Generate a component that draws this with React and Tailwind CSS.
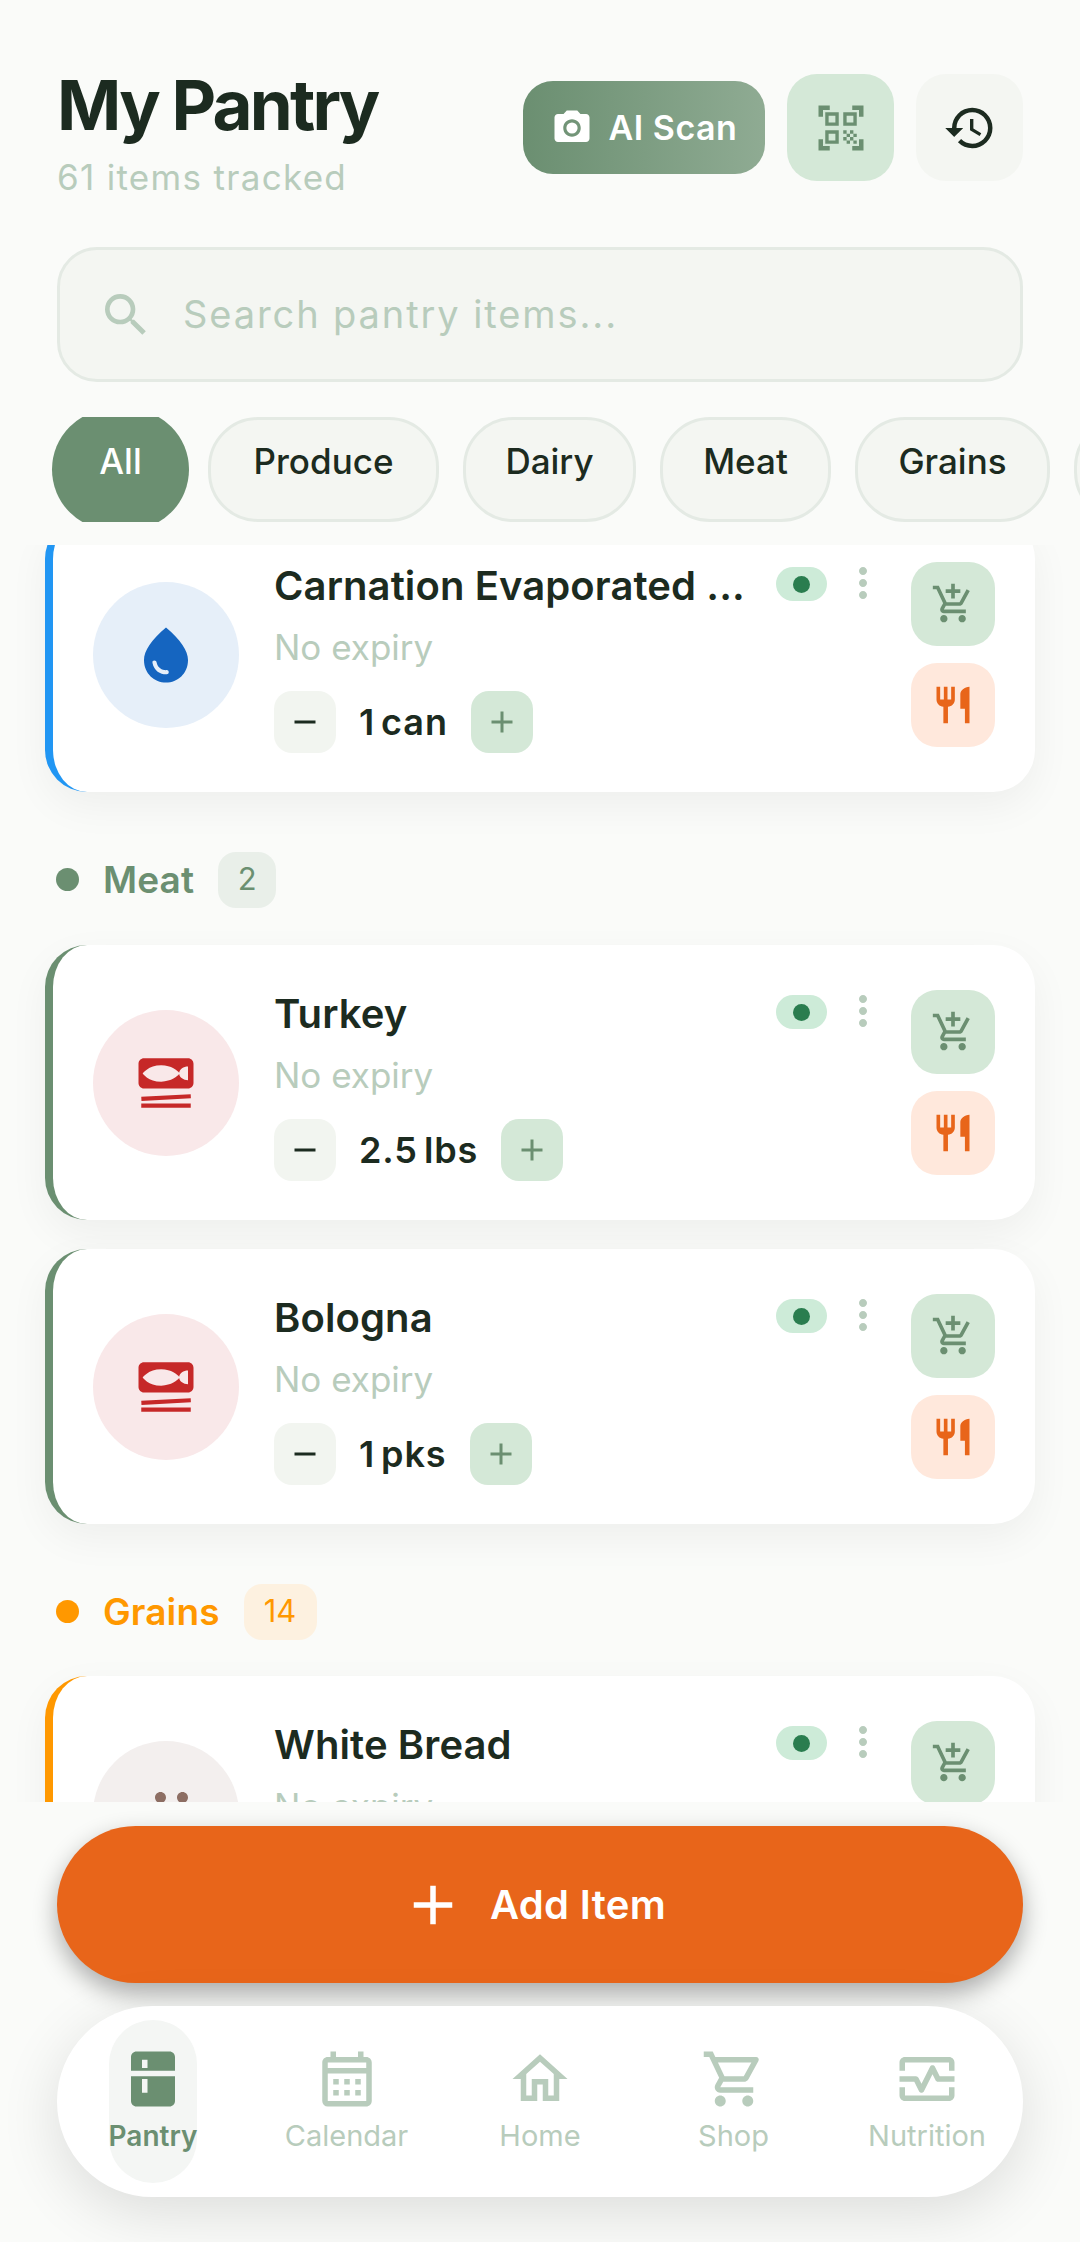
import React from "react";
import {
  MdCameraAlt,
  MdQrCodeScanner,
  MdHistory,
  MdSearch,
  MdWaterDrop,
  MdSetMeal,
  MdGrain,
  MdOutlineAddShoppingCart,
  MdRestaurant,
  MdMoreVert,
  MdAdd,
  MdRemove,
  MdKitchen,
  MdOutlineCalendarMonth,
  MdOutlineHome,
  MdOutlineShoppingCart,
  MdOutlineMonitorHeart,
} from "react-icons/md";

const chips = [
  { label: "Produce", width: "w-[231px]" },
  { label: "Dairy", width: "w-[173px]" },
  { label: "Meat", width: "w-[171px]" },
  { label: "Grains", width: "w-[195px]" },
  { label: "Frozen", width: "w-[190px]" },
];

const ItemCard = ({ name, qty, border, circle, icon: Icon, iconColor }) => (
  <div
    className={`flex h-[275px] shrink-0 items-start rounded-[42px] border-l-[8px] bg-white pl-[40px] pr-[40px] shadow-[0_14px_40px_rgba(0,0,0,0.05)] ${border}`}
  >
    <div className={`mt-[65px] flex h-[146px] w-[146px] shrink-0 items-center justify-center rounded-full ${circle}`}>
      <Icon size={66} className={iconColor} />
    </div>
    <div className="ml-[35px] flex w-[470px] shrink-0 flex-col pt-[44px]">
      <div className="text-[40px] leading-[50px] font-semibold tracking-[0.1px] whitespace-nowrap text-[#1C2B20]">{name}</div>
      <div className="mt-[11px] text-[35px] leading-[50px] text-[#B8CCBC]">No expiry</div>
      <div className="mt-[19px] flex items-center gap-[23px]">
        <div className="flex h-[62px] w-[62px] items-center justify-center rounded-[18px] bg-[#F2F5F0]">
          <MdRemove size={36} className="text-[#1C2B20]" />
        </div>
        <span className="text-[36px] leading-[62px] font-semibold tracking-[0.9px] [word-spacing:-4px] text-[#1C2B20]">{qty}</span>
        <div className="flex h-[62px] w-[62px] items-center justify-center rounded-[18px] bg-[#D4E8D7]">
          <MdAdd size={36} className="text-[#6B8F71]" />
        </div>
      </div>
    </div>
    <div className="ml-[32px] mt-[50px] flex h-[34px] w-[51px] shrink-0 items-center justify-center rounded-full bg-[#CDEBD8]">
      <div className="h-[17px] w-[17px] rounded-full bg-[#2A7D4F]" />
    </div>
    <MdMoreVert size={48} className="mt-[42px] ml-[12px] shrink-0 text-[#B8CCBC]" />
    <div className="mt-[45px] ml-[24px] flex shrink-0 flex-col gap-[17px]">
      <div className="flex h-[84px] w-[84px] items-center justify-center rounded-[26px] bg-[#D4E8D7]">
        <MdOutlineAddShoppingCart size={44} className="text-[#6B8F71]" />
      </div>
      <div className="flex h-[84px] w-[84px] items-center justify-center rounded-[26px] bg-[#FFE8DC]">
        <MdRestaurant size={44} className="text-[#E8651A]" />
      </div>
    </div>
  </div>
);

const SectionHeader = ({ label, count, dot, text, badge, badgeWidth }) => (
  <div className="flex h-[57px] items-center pl-[11px]">
    <div className={`h-[23px] w-[23px] rounded-full ${dot}`} />
    <span className={`ml-[24px] text-[37px] leading-[50px] font-semibold tracking-[0.1px] ${text}`}>{label}</span>
    <div className={`ml-[24px] flex h-[56px] items-center justify-center rounded-[18px] text-[31px] ${badge} ${text} ${badgeWidth}`}>
      {count}
    </div>
  </div>
);

const NavItem = ({ icon: Icon, label, active }) => (
  <div
    className={`flex h-[163px] w-[88px] flex-col items-center rounded-[44px] pt-[26px] ${active ? "bg-[#F4F6F4] text-[#6B8F71]" : "text-[#B8CCBC]"}`}
  >
    <Icon size={66} className="shrink-0" />
    <span className={`mt-[4px] leading-[40px] whitespace-nowrap ${active ? "text-[28px] font-semibold" : "text-[29px]"}`}>{label}</span>
  </div>
);

export default function App() {
  return (
    <div
      className="flex h-[2242px] w-[1080px] flex-col overflow-hidden bg-[#FAFBF9]"
      style={{ fontFamily: "Inter, 'Noto Sans', sans-serif" }}
    >
      {/* Header */}
      <div className="flex h-[247px] shrink-0 items-start justify-between pl-[57px] pr-[57px] pt-[70px]">
        <div>
          <h1 className="text-[69px] leading-[70px] font-bold tracking-[-2.8px] text-[#1C2B20]">My Pantry</h1>
          <p className="mt-[12px] text-[35px] leading-[50px] tracking-[1.3px] text-[#B8CCBC]">61 items tracked</p>
        </div>
        <div className="mt-[4px] flex items-start gap-[22px]">
          <div className="mt-[7px] flex h-[93px] w-[242px] items-center justify-center gap-[16px] rounded-[30px] bg-linear-to-r from-[#6B8F71] to-[#8FAB93] text-white">
            <MdCameraAlt size={42} />
            <span className="text-[34px] font-semibold tracking-[0.5px]">AI Scan</span>
          </div>
          <div className="flex h-[107px] w-[107px] items-center justify-center rounded-[30px] bg-[#D4E8D7]">
            <MdQrCodeScanner size={54} className="text-[#6B8F71]" />
          </div>
          <div className="flex h-[107px] w-[107px] items-center justify-center rounded-[30px] bg-[#F4F6F2]">
            <MdHistory size={54} className="text-[#1C2B20]" />
          </div>
        </div>
      </div>

      {/* Search */}
      <div className="mx-[57px] flex h-[135px] shrink-0 items-center rounded-[40px] border-[3px] border-[#E4EAE4] bg-[#F4F6F2] pl-[38px]">
        <MdSearch size={56} className="text-[#B8CCBC]" />
        <span className="ml-[29px] text-[38px] tracking-[1.9px] text-[#B8CCBC]">Search pantry items...</span>
      </div>

      {/* Category chips */}
      <div className="mt-[35px] flex h-[105px] shrink-0 gap-[24px] overflow-hidden pl-[52px]">
        <div className="-mt-[8px] -mr-[5px] flex h-[121px] w-[137px] shrink-0 justify-center rounded-full bg-[#6B8F71] pt-[32px] text-[35px] leading-[40px] font-medium text-white">
          All
        </div>
        {chips.map((c) => (
          <div
            key={c.label}
            className={`flex h-[105px] shrink-0 justify-center rounded-[50px] border-[3px] border-[#E4EAE4] bg-[#F4F6F2] pt-[21px] text-[35px] leading-[40px] font-medium text-[#1C2B20] ${c.width}`}
          >
            {c.label}
          </div>
        ))}
      </div>

      {/* Scrolled list */}
      <div className="mt-[23px] h-[1257px] shrink-0 overflow-hidden px-[45px]">
        <div className="-mt-[28px] flex flex-col">
          <ItemCard
            name="Carnation Evaporated ..."
            qty="1 can"
            border="border-[#2196F3]"
            circle="bg-[#E6EFF9]"
            icon={MdWaterDrop}
            iconColor="text-[#1565C0]"
          />
          <div className="mt-[59px] mb-[37px]">
            <SectionHeader label="Meat" count="2" dot="bg-[#6B8F71]" text="text-[#6B8F71]" badge="bg-[#E9EFE9]" badgeWidth="w-[58px]" />
          </div>
          <div className="flex flex-col gap-[29px]">
            <ItemCard name="Turkey" qty="2.5 lbs" border="border-[#6B8F71]" circle="bg-[#F9E8E9]" icon={MdSetMeal} iconColor="text-[#C62828]" />
            <ItemCard name="Bologna" qty="1 pks" border="border-[#6B8F71]" circle="bg-[#F9E8E9]" icon={MdSetMeal} iconColor="text-[#C62828]" />
          </div>
          <div className="mt-[59px] mb-[36px]">
            <SectionHeader label="Grains" count="14" dot="bg-[#FF9800]" text="text-[#FF9800]" badge="bg-[#FDF1E0]" badgeWidth="w-[73px]" />
          </div>
          <ItemCard name="White Bread" qty="1 loaf" border="border-[#FF9800]" circle="bg-[#F3EFEE]" icon={MdGrain} iconColor="text-[#8D6E63]" />
        </div>
      </div>

      {/* Add item */}
      <div className="mx-[57px] mt-[24px] flex h-[157px] shrink-0 items-center justify-center gap-[24px] rounded-full bg-[#E8651A] pr-[14px] text-white shadow-[0_10px_24px_rgba(0,0,0,0.32)]">
        <MdAdd size={66} />
        <span className="text-[40px] font-semibold tracking-[0.3px]">Add Item</span>
      </div>

      {/* Bottom nav */}
      <div className="mx-[57px] mt-[23px] flex h-[191px] shrink-0 items-center justify-between rounded-[96px] bg-white pl-[52px] pr-[52px] shadow-[0_16px_60px_rgba(0,0,0,0.12)]">
        <NavItem icon={MdKitchen} label="Pantry" active />
        <NavItem icon={MdOutlineCalendarMonth} label="Calendar" />
        <NavItem icon={MdOutlineHome} label="Home" />
        <NavItem icon={MdOutlineShoppingCart} label="Shop" />
        <NavItem icon={MdOutlineMonitorHeart} label="Nutrition" />
      </div>
    </div>
  );
}
